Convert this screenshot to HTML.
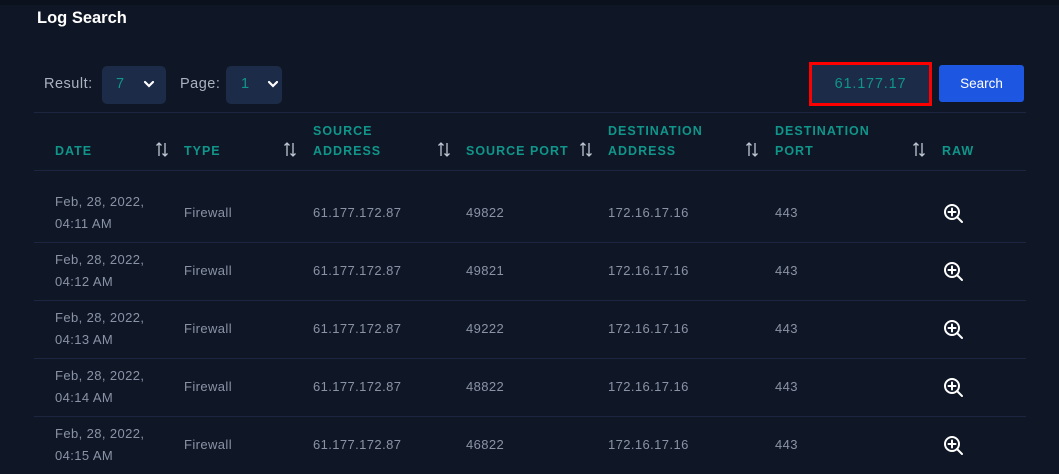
<!DOCTYPE html>
<html><head><style>
*{margin:0;padding:0;box-sizing:border-box}
body{width:1059px;height:474px;background:#0f1726;font-family:"Liberation Sans",sans-serif;position:relative;overflow:hidden}
.top{position:absolute;left:0;top:0;width:1059px;height:5px;background:#0b111d}
.a{position:absolute;white-space:nowrap}
.h{color:#10958a;font-size:12.5px;font-weight:bold;letter-spacing:1px;line-height:20px}
.t{color:#8a93a5;font-size:13px;letter-spacing:0.4px;line-height:22px}
.line{position:absolute;left:34px;width:992px;height:1px;background:#1c2640}
.sel{position:absolute;top:66px;height:38px;background:#1c2b47;border-radius:5px}
</style></head><body>
<div class="top"></div>
<div class="a" style="left:37px;top:9px;color:#fff;font-size:16.5px;font-weight:bold">Log Search</div>
<div class="a" style="left:44px;top:76px;color:#aab2c0;font-size:14.5px;letter-spacing:0.5px">Result:</div>
<div class="sel" style="left:102px;width:64px"></div>
<div class="a" style="left:116px;top:76px;color:#10958a;font-size:14.5px">7</div>
<svg class="a" style="left:142px;top:78px" width="14" height="12" viewBox="0 0 14 12"><path d="M3 4l4 4 4-4" stroke="#fff" stroke-width="2.2" fill="none" stroke-linecap="round"/></svg>
<div class="a" style="left:180px;top:76px;color:#aab2c0;font-size:14.5px;letter-spacing:0.5px">Page:</div>
<div class="sel" style="left:226px;width:56px"></div>
<div class="a" style="left:241px;top:76px;color:#10958a;font-size:14.5px">1</div>
<svg class="a" style="left:266px;top:78px" width="14" height="12" viewBox="0 0 14 12"><path d="M3 4l4 4 4-4" stroke="#fff" stroke-width="2.2" fill="none" stroke-linecap="round"/></svg>
<div class="a" style="left:809px;top:62px;width:123px;height:44px;border:3px solid #f00;background:#1c2b47;color:#10958a;font-size:14.5px;text-align:center;line-height:38px;letter-spacing:0.8px">61.177.17</div>
<div class="a" style="left:939px;top:65px;width:85px;height:37px;background:#1d56e0;border-radius:3px;color:#fff;font-size:13.5px;text-align:center;line-height:37px">Search</div>
<div class="line" style="top:112px"></div>
<div class="line" style="top:170px"></div>
<div class="a h" style="left:55px;top:141px">DATE</div>
<div class="a h" style="left:184px;top:141px">TYPE</div>
<div class="a h" style="left:313px;top:121px">SOURCE<br>ADDRESS</div>
<div class="a h" style="left:466px;top:141px">SOURCE PORT</div>
<div class="a h" style="left:608px;top:121px">DESTINATION<br>ADDRESS</div>
<div class="a h" style="left:775px;top:121px">DESTINATION<br>PORT</div>
<div class="a h" style="left:942px;top:141px">RAW</div>
<svg class="a" style="left:0;top:0" width="1059" height="474">
<g stroke="#c0c6d2" stroke-width="1.3" fill="none">
<path id="s" d="M159 156V143M156.5 145.5L159 143L161.5 145.5M165 143V156M162.5 153.5L165 156L167.5 153.5"/>
<use href="#s" x="128"/><use href="#s" x="282"/><use href="#s" x="424"/><use href="#s" x="590"/><use href="#s" x="757"/>
</g></svg>

<div class="a t" style="left:55px;top:191px">Feb, 28, 2022,<br>04:11 AM</div>
<div class="a t" style="left:184px;top:202px">Firewall</div><div class="a t" style="left:313px;top:202px">61.177.172.87</div><div class="a t" style="left:466px;top:202px">49822</div><div class="a t" style="left:608px;top:202px">172.16.17.16</div><div class="a t" style="left:775px;top:202px">443</div>
<svg class="a" style="left:943px;top:203px" width="22" height="22" viewBox="0 0 22 22"><circle cx="9" cy="9" r="7" stroke="#fff" stroke-width="2" fill="none"/><path d="M9 5.5v7M5.5 9h7M14 14l5 5" stroke="#fff" stroke-width="2" stroke-linecap="round"/></svg>
<div class="line" style="top:242px"></div>

<div class="a t" style="left:55px;top:249px">Feb, 28, 2022,<br>04:12 AM</div>
<div class="a t" style="left:184px;top:260px">Firewall</div><div class="a t" style="left:313px;top:260px">61.177.172.87</div><div class="a t" style="left:466px;top:260px">49821</div><div class="a t" style="left:608px;top:260px">172.16.17.16</div><div class="a t" style="left:775px;top:260px">443</div>
<svg class="a" style="left:943px;top:261px" width="22" height="22" viewBox="0 0 22 22"><circle cx="9" cy="9" r="7" stroke="#fff" stroke-width="2" fill="none"/><path d="M9 5.5v7M5.5 9h7M14 14l5 5" stroke="#fff" stroke-width="2" stroke-linecap="round"/></svg>
<div class="line" style="top:300px"></div>

<div class="a t" style="left:55px;top:307px">Feb, 28, 2022,<br>04:13 AM</div>
<div class="a t" style="left:184px;top:318px">Firewall</div><div class="a t" style="left:313px;top:318px">61.177.172.87</div><div class="a t" style="left:466px;top:318px">49222</div><div class="a t" style="left:608px;top:318px">172.16.17.16</div><div class="a t" style="left:775px;top:318px">443</div>
<svg class="a" style="left:943px;top:319px" width="22" height="22" viewBox="0 0 22 22"><circle cx="9" cy="9" r="7" stroke="#fff" stroke-width="2" fill="none"/><path d="M9 5.5v7M5.5 9h7M14 14l5 5" stroke="#fff" stroke-width="2" stroke-linecap="round"/></svg>
<div class="line" style="top:358px"></div>

<div class="a t" style="left:55px;top:365px">Feb, 28, 2022,<br>04:14 AM</div>
<div class="a t" style="left:184px;top:376px">Firewall</div><div class="a t" style="left:313px;top:376px">61.177.172.87</div><div class="a t" style="left:466px;top:376px">48822</div><div class="a t" style="left:608px;top:376px">172.16.17.16</div><div class="a t" style="left:775px;top:376px">443</div>
<svg class="a" style="left:943px;top:377px" width="22" height="22" viewBox="0 0 22 22"><circle cx="9" cy="9" r="7" stroke="#fff" stroke-width="2" fill="none"/><path d="M9 5.5v7M5.5 9h7M14 14l5 5" stroke="#fff" stroke-width="2" stroke-linecap="round"/></svg>
<div class="line" style="top:416px"></div>

<div class="a t" style="left:55px;top:423px">Feb, 28, 2022,<br>04:15 AM</div>
<div class="a t" style="left:184px;top:434px">Firewall</div><div class="a t" style="left:313px;top:434px">61.177.172.87</div><div class="a t" style="left:466px;top:434px">46822</div><div class="a t" style="left:608px;top:434px">172.16.17.16</div><div class="a t" style="left:775px;top:434px">443</div>
<svg class="a" style="left:943px;top:435px" width="22" height="22" viewBox="0 0 22 22"><circle cx="9" cy="9" r="7" stroke="#fff" stroke-width="2" fill="none"/><path d="M9 5.5v7M5.5 9h7M14 14l5 5" stroke="#fff" stroke-width="2" stroke-linecap="round"/></svg>
</body></html>
